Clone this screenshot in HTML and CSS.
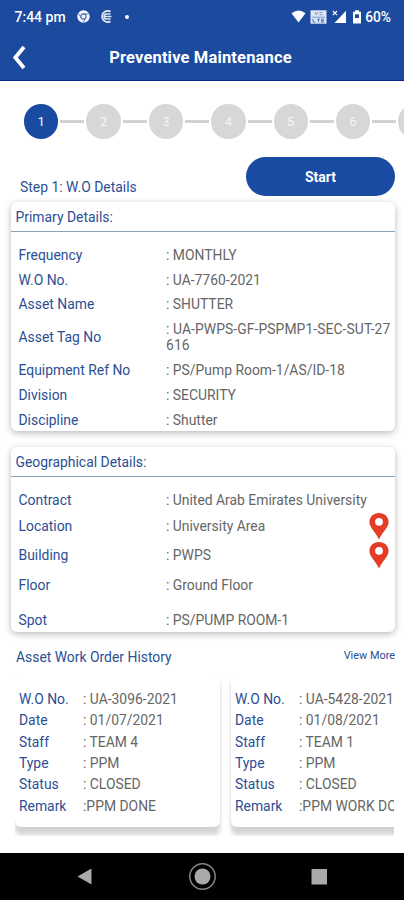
FILE: index.html
```html
<!DOCTYPE html>
<html lang="en">
<head>
  <meta charset="UTF-8" />
  <meta name="viewport" content="width=device-width, initial-scale=1.0"/>
  <title>Preventive Maintenance</title>
  <link rel="stylesheet" href="styles.css">
</head>
<body>

  <!-- Header -->
  <header>
    <div class="status-bar">
      <span class="time">7:44 pm</span>
      <svg class="chrome" width="13" height="13" viewBox="0 0 13 13">
        <circle cx="6.5" cy="6.5" r="6.2" fill="#f4f7fc"/>
        <circle cx="6.5" cy="6.5" r="2.6" fill="none" stroke="#4a6fb5" stroke-width="1.1"/>
        <path d="M6.5 3.9H11.8M4.2 7.8L1.6 3.5M8.8 7.8L6.3 12.4" stroke="#4a6fb5" stroke-width="0.9"/>
      </svg>
      <svg class="app-icon" width="13" height="13" viewBox="0 0 13 13" fill="none" stroke="#dbe5f5">
        <path d="M10.5 1.6A5.6 5.6 0 1 0 10.5 11.4" stroke-width="1.8"/>
        <path d="M10.5 4H6.6A2.5 2.5 0 0 0 6.6 9H10.5M4.5 6.5H11.5" stroke-width="1.4"/>
      </svg>
      <span class="dot"></span>
      <div class="status-right">
        <svg class="wifi" width="15" height="13" viewBox="0 0 15 13">
          <path d="M0.5 3.2Q7.5 -2 14.5 3.2L7.5 12.5Z" fill="#fff"/>
        </svg>
        <svg class="volte" width="17" height="14" viewBox="0 0 17 14">
          <rect x="0.5" y="0.3" width="16" height="13.4" fill="#dce6f5"/>
          <path d="M5 2l1.5 3L8 2M9.5 2.5h3M9.5 4.7h3M2 7.2h13" fill="none" stroke="#7d9bce" stroke-width="1"/>
          <path d="M3 9v3h2.5M7 9.2h3M8.5 9v3.2M14 9.2h-2.5v3H14M11.5 10.7H14" fill="none" stroke="#5478bb" stroke-width="1"/>
        </svg>
        <svg class="signal" width="15" height="14" viewBox="0 0 15 14">
          <path d="M14 0.8V13H2.5Z" fill="#fff"/>
          <path d="M0.8 1L5 5.2M5 1L0.8 5.2" stroke="#fff" stroke-width="1.1"/>
        </svg>
        <svg class="battery" width="10" height="14" viewBox="0 0 10 14">
          <path d="M3 0.3h4v1.5h2v11.7H1V1.8h2Z" fill="#fff"/>
          <rect x="3" y="4.3" width="4" height="3.7" fill="#1b4a9f"/>
        </svg>
        <span class="percent">60%</span>
      </div>
    </div>
    <div class="title-bar">
      <svg class="back" width="14" height="25" viewBox="0 0 14 25">
        <path d="M12 2L3.3 12.5L12 23" fill="none" stroke="#fff" stroke-width="3.8"/>
      </svg>
      <h1>Preventive Maintenance</h1>
    </div>
  </header>

  <!-- Steps -->
  <div class="stepper">
    <span class="step active">1</span><span class="line"></span>
    <span class="step">2</span><span class="line"></span>
    <span class="step">3</span><span class="line"></span>
    <span class="step">4</span><span class="line"></span>
    <span class="step">5</span><span class="line"></span>
    <span class="step">6</span><span class="line"></span>
    <span class="step"></span>
  </div>

  <div class="step-head">
    <span class="step-name">Step 1: W.O Details</span>
    <button type="button" class="start-btn">Start</button>
  </div>

  <!-- Primary Details -->
  <section class="card primary">
    <h2>Primary Details:</h2>
    <div class="rows">
      <div class="row"><span class="label">Frequency</span><span class="value">: MONTHLY</span></div>
      <div class="row"><span class="label">W.O No.</span><span class="value">: UA-7760-2021</span></div>
      <div class="row"><span class="label">Asset Name</span><span class="value">: SHUTTER</span></div>
      <div class="row tag"><span class="label">Asset Tag No</span><span class="value">: UA-PWPS-GF-PSPMP1-SEC-SUT-27<br>616</span></div>
      <div class="row"><span class="label">Equipment Ref No</span><span class="value">: PS/Pump Room-1/AS/ID-18</span></div>
      <div class="row"><span class="label">Division</span><span class="value">: SECURITY</span></div>
      <div class="row"><span class="label">Discipline</span><span class="value">: Shutter</span></div>
    </div>
  </section>

  <!-- Geographical Details -->
  <section class="card geo">
    <h2>Geographical Details:</h2>
    <div class="rows">
      <div class="row contract"><span class="label">Contract</span><span class="value">: United Arab Emirates University</span></div>
      <div class="row place location">
        <span class="label">Location</span><span class="value">: University Area</span>
        <svg class="pin" width="20" height="28" viewBox="0 0 20 28">
          <path d="M10 1C4.5 1 0.4 4.9 0.4 10C0.4 15.5 6 19 10 27.5C14 19 19.6 15.5 19.6 10C19.6 4.9 15.5 1 10 1Z" fill="#e43d27"/>
          <circle cx="10" cy="9.8" r="3.9" fill="#fff"/>
        </svg>
      </div>
      <div class="row place">
        <span class="label">Building</span><span class="value">: PWPS</span>
        <svg class="pin" width="20" height="28" viewBox="0 0 20 28">
          <path d="M10 1C4.5 1 0.4 4.9 0.4 10C0.4 15.5 6 19 10 27.5C14 19 19.6 15.5 19.6 10C19.6 4.9 15.5 1 10 1Z" fill="#e43d27"/>
          <circle cx="10" cy="9.8" r="3.9" fill="#fff"/>
        </svg>
      </div>
      <div class="row floor"><span class="label">Floor</span><span class="value">: Ground Floor</span></div>
      <div class="row spot"><span class="label">Spot</span><span class="value">: PS/PUMP ROOM-1</span></div>
    </div>
  </section>

  <!-- Work Order History -->
  <div class="history-head">
    <h2>Asset Work Order History</h2>
    <a href="#">View More</a>
  </div>
  <div class="history">
    <div class="order">
      <div class="row"><span class="label">W.O No.</span><span class="value">: UA-3096-2021</span></div>
      <div class="row"><span class="label">Date</span><span class="value">: 01/07/2021</span></div>
      <div class="row"><span class="label">Staff</span><span class="value">: TEAM 4</span></div>
      <div class="row"><span class="label">Type</span><span class="value">: PPM</span></div>
      <div class="row"><span class="label">Status</span><span class="value">: CLOSED</span></div>
      <div class="row"><span class="label">Remark</span><span class="value">:PPM DONE</span></div>
    </div>
    <div class="order">
      <div class="row"><span class="label">W.O No.</span><span class="value">: UA-5428-2021</span></div>
      <div class="row"><span class="label">Date</span><span class="value">: 01/08/2021</span></div>
      <div class="row"><span class="label">Staff</span><span class="value">: TEAM 1</span></div>
      <div class="row"><span class="label">Type</span><span class="value">: PPM</span></div>
      <div class="row"><span class="label">Status</span><span class="value">: CLOSED</span></div>
      <div class="row"><span class="label">Remark</span><span class="value">:PPM WORK DO</span></div>
    </div>
  </div>

  <!-- Android navigation -->
  <nav>
    <svg width="404" height="46" viewBox="0 0 404 46">
      <path d="M77.5 23.5L91.5 15.5V31.5Z" fill="#a9a9a9"/>
      <circle cx="202.5" cy="23.5" r="12.7" fill="none" stroke="#858585" stroke-width="1.5"/>
      <circle cx="202.5" cy="23.5" r="8" fill="#a9a9a9"/>
      <rect x="311.5" y="16" width="15.5" height="15.5" fill="#a9a9a9"/>
    </svg>
  </nav>

</body>
</html>
```
FILE: styles.css
```css
* {
  box-sizing: border-box;
  margin: 0;
  padding: 0;
}

body {
  display: flex;
  flex-direction: column;
  height: 900px;
  overflow: hidden;
  font-family: Roboto, 'Liberation Sans', sans-serif;
  font-size: 13.9px;
  background-color: #fff;
}

header {
  height: 81px;
  background-color: #1b4a9f;
  border-bottom: 1px solid #062482;
  color: #fff;
}

.status-bar {
  display: flex;
  align-items: center;
  height: 33px;
  padding: 0 13px 0 14.5px;
}

.time {
  width: 62px;
  font-size: 14px;
  font-weight: 500;
}

.app-icon {
  margin-left: 10px;
}

.dot {
  width: 4px;
  height: 4px;
  margin-left: 12px;
  border-radius: 50%;
  background-color: #fff;
}

.status-right {
  display: flex;
  align-items: center;
  margin-left: auto;
}

.volte {
  margin-left: 4px;
}

.signal {
  margin-left: 5px;
}

.battery {
  margin-left: 5px;
}

.percent {
  margin-left: 3px;
  font-size: 13.8px;
  font-weight: 500;
}

.title-bar {
  display: grid;
  grid-template-columns: 60px 1fr 60px;
  align-items: center;
  height: 48px;
  padding-left: 12px;
}

h1 {
  padding-right: 15px;
  font-size: 16.5px;
  font-weight: 700;
  letter-spacing: 0.15px;
  text-align: center;
  white-space: nowrap;
}

.stepper {
  display: flex;
  align-items: center;
  height: 76px;
  padding: 5px 0 0 24px;
  overflow: hidden;
}

.step {
  flex: none;
  width: 34.4px;
  height: 34.4px;
  border-radius: 50%;
  background-color: #d7d7d7;
  color: #f5f5f5;
  font-size: 13px;
  line-height: 36px;
  text-align: center;
}

.step.active {
  background-color: #1a4ba3;
}

.line {
  flex: none;
  width: 24px;
  height: 3px;
  margin: 0 2px;
  background-color: #d2d2d2;
}

.step-head {
  display: flex;
  justify-content: space-between;
  height: 45px;
  padding: 0 9px 0 20px;
}

.step-name {
  margin-top: 21px;
  color: #2c4f94;
  line-height: 18px;
}

.start-btn {
  width: 149px;
  height: 39px;
  border: none;
  border-radius: 20px;
  background-color: #1a4ba3;
  color: #fff;
  font-family: inherit;
  font-size: 14px;
  font-weight: 700;
  line-height: 41px;
}

.card {
  flex: none;
  margin: 0 9.5px 0 11px;
  border-radius: 6px;
  background-color: #fff;
  box-shadow: 0 2px 7px rgba(0, 0, 0, 0.28);
}

.primary {
  height: 229px;
}

.geo {
  height: 185px;
  margin-top: 16px;
}

h2 {
  color: #2c4f94;
  font-size: 13.9px;
  font-weight: 400;
}

.card h2 {
  height: 30px;
  padding-left: 4.5px;
  border-bottom: 1.5px solid #8aa3b4;
  line-height: 30px;
}

.rows {
  padding: 10.5px 0 0 7.5px;
}

.row {
  display: flex;
  align-items: center;
  height: 24.8px;
}

.label {
  flex: none;
  width: 147.5px;
  color: #2c4f94;
}

.value {
  color: #666;
  line-height: 16px;
  white-space: nowrap;
}

.row.tag {
  height: 41px;
}

.row.tag .value {
  letter-spacing: 0.07px;
}

.geo .rows {
  padding-top: 10.5px;
}

.row.contract {
  height: 25px;
}

.row.place {
  height: 30px;
}

.row.location {
  height: 27px;
}

.pin {
  margin: 0 6px 0 auto;
}

.row.floor {
  height: 31px;
}

.row.spot {
  height: 38px;
}

.history-head {
  display: flex;
  justify-content: space-between;
  height: 42px;
  padding: 17px 9px 0 16px;
}

.history-head a {
  color: #2c4f94;
  font-size: 10.9px;
  text-decoration: none;
}

.history {
  display: flex;
  gap: 11px;
  height: 162px;
  margin: 0 10px 0 15px;
  overflow: hidden;
}

.order {
  flex: none;
  width: 205px;
  height: 153px;
  padding: 14.5px 0 0 4px;
  border-radius: 6px;
  background-color: #fff;
  box-shadow: 0 8px 4px rgba(0, 0, 0, 0.17), 0 0 2px rgba(0, 0, 0, 0.08);
}

.order .row {
  height: 21.3px;
}

.order .label {
  width: 64px;
}

nav {
  height: 47px;
  margin-top: auto;
  background-color: #000;
}
```
